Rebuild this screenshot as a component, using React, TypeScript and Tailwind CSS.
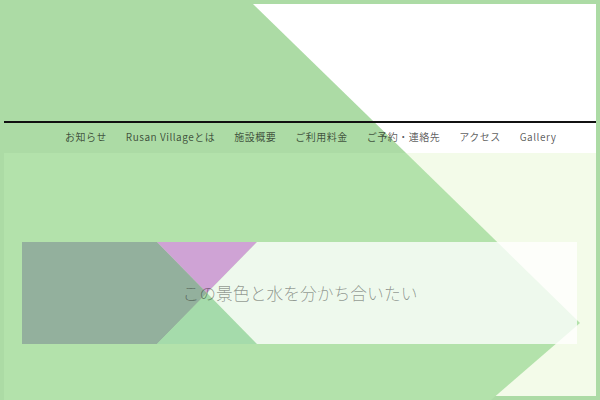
const navItems = [
  "お知らせ",
  "Rusan Villageとは",
  "施設概要",
  "ご利用料金",
  "ご予約・連絡先",
  "アクセス",
  "Gallery",
];

export default function App() {
  return (
    <div className="w-[600px] h-[400px] bg-[#acdba5] p-1 flex flex-col overflow-hidden font-['Noto_Sans_CJK_JP','Noto_Sans',sans-serif]">
      {/* Header */}
      <header className="relative h-[149px] bg-white shrink-0">
        <svg className="absolute inset-0" width="592" height="149" viewBox="0 0 592 149">
          <polygon points="0,0 249,0 402,149 0,149" fill="#acdba5" />
        </svg>
        <div className="relative flex flex-col h-full">
          <div className="h-[117px]" />
          <div className="h-[2px] bg-[#111]" />
          <nav className="flex-1 flex items-center gap-[19px] pl-[61px] pb-[2px]">
            {navItems.map((item) => (
              <a
                key={item}
                href="#"
                className="text-[10px] leading-none tracking-[0.05em] text-black/65 whitespace-nowrap"
              >
                {item}
              </a>
            ))}
          </nav>
        </div>
      </header>

      {/* Main */}
      <main className="relative flex-1 bg-[#f3fbe9]">
        <svg className="absolute inset-0" width="592" height="247" viewBox="0 0 592 247">
          <polygon points="0,0 402,0 576,170 487,247 0,247" fill="#b3e2ab" />
        </svg>
        <div className="relative pt-[89px] pl-[18px]">
          <div className="relative w-[555px] h-[102px] flex items-center justify-center">
            <svg className="absolute inset-0" width="555" height="102" viewBox="0 0 555 102">
              <polygon points="0,0 135,0 185,51 135,102 0,102" fill="#93b09d" />
              <polygon points="135,0 235,0 185,51" fill="#cfa3d5" />
              <polygon points="135,102 185,51 235,102" fill="#a5dbab" />
              <polygon points="235,0 555,0 555,102 235,102 185,51" fill="#ffffff" fillOpacity="0.78" />
            </svg>
            <p className="relative text-[16.8px] font-light leading-none text-black/40 pl-[1px]">
              この景色と水を分かち合いたい
            </p>
          </div>
        </div>
      </main>
    </div>
  );
}
